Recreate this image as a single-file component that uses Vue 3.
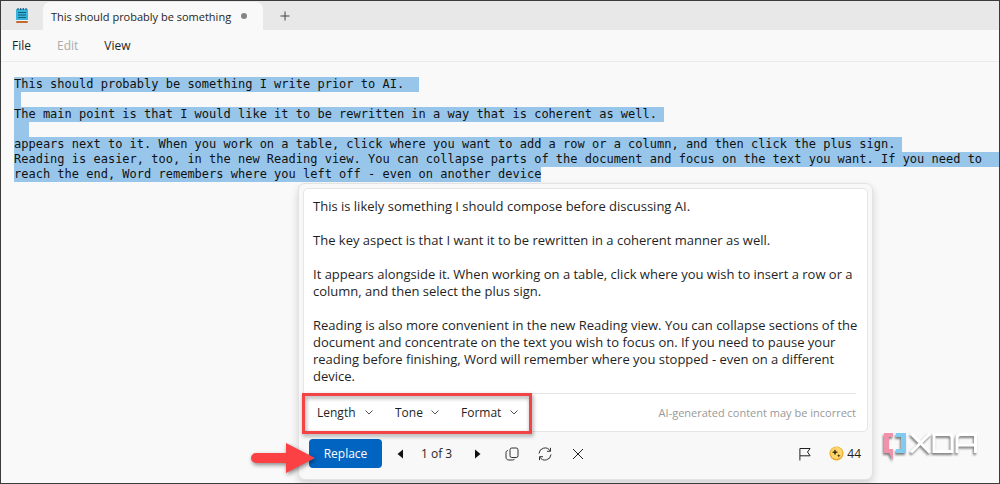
<script setup>
import { ref } from 'vue'

const lines = [
  { text: 'This should probably be something I write prior to AI.', tail: 'wide' },
  { text: '', tail: 'short' },
  { text: 'The main point is that I would like it to be rewritten in a way that is coherent as well.', tail: 'short' },
  { text: '', tail: 'wide' },
  { text: 'appears next to it. When you work on a table, click where you want to add a row or a column, and then click the plus sign.', tail: 'short' },
  { text: 'Reading is easier, too, in the new Reading view. You can collapse parts of the document and focus on the text you want. If you need to', tail: 'full' },
  { text: 'reach the end, Word remembers where you left off - even on another device', tail: 'none' },
]

const paragraphs = [
  ['This is likely something I should compose before discussing AI.'],
  ['The key aspect is that I want it to be rewritten in a coherent manner as well.'],
  ['It appears alongside it. When working on a table, click where you wish to insert a row or a', 'column, and then select the plus sign.'],
  [
    'Reading is also more convenient in the new Reading view. You can collapse sections of the',
    'document and concentrate on the text you wish to focus on. If you need to pause your',
    'reading before finishing, Word will remember where you stopped - even on a different',
    'device.',
  ],
]

const tools = ['Length', 'Tone', 'Format']
const page = ref(1)
const total = 3
const step = (d) => { page.value = Math.min(total, Math.max(1, page.value + d)) }
</script>

<template>
  <div class="window">
    <header class="tabbar">
      <div class="app-icon">
        <svg width="14" height="17" viewBox="0 0 14 17" aria-hidden="true">
          <rect x="1" y="2" width="12" height="12" rx="1" fill="#35b3d8" />
          <rect x="1" y="13" width="12" height="1" fill="#e9f4f8" />
          <rect x="1" y="14" width="12" height="2" rx="1" fill="#c4682b" />
          <path d="M3 1v2M5.7 1v2M8.3 1v2M11 1v2" stroke="#1d5f80" stroke-width="1.2" />
          <path d="M3 5.5h8M3 8h8M3 10.5h8" stroke="#155e83" stroke-width="1.1" />
        </svg>
      </div>
      <div class="tab">
        <span class="tab-title">This should probably be something</span>
        <span class="dot"></span>
      </div>
      <button class="new-tab" aria-label="New tab">
        <svg width="10" height="10" viewBox="0 0 10 10"><path d="M5 .5v9M.5 5h9" stroke="#444" stroke-width="1" /></svg>
      </button>
    </header>

    <nav class="menu">
      <button>File</button>
      <button disabled>Edit</button>
      <button>View</button>
    </nav>

    <main class="editor">
      <div class="document" role="textbox" aria-multiline="true" aria-label="Document" contenteditable="true" spellcheck="false">
        <div v-for="(line, i) in lines" :key="i" class="line">
          <span class="selected" :class="line.tail">{{ line.text }}</span>
        </div>
      </div>
    </main>

    <section class="panel">
      <div class="card">
        <div class="result">
          <p v-for="(p, i) in paragraphs" :key="i">
            <span v-for="row in p" :key="row" class="row">{{ row }}</span>
          </p>
        </div>
        <div class="tools">
          <label v-for="t in tools" :key="t" class="tool">
            <select :aria-label="t" :class="t.toLowerCase()"><option>{{ t }}</option></select>
            <svg width="8" height="5" viewBox="0 0 8 5"><path d="M.5.5 4 4 7.5.5" fill="none" stroke="#555" /></svg>
          </label>
          <span class="note">AI-generated content may be incorrect</span>
        </div>
      </div>
      <footer class="actions">
        <button class="replace">Replace</button>
        <div class="pager">
          <button aria-label="Previous" @click="step(-1)"><svg width="6" height="10" viewBox="0 0 6 10"><path d="M6 .5v9L.5 5z" fill="#111" /></svg></button>
          <span class="count">{{ page }} of {{ total }}</span>
          <button aria-label="Next" @click="step(1)"><svg width="6" height="10" viewBox="0 0 6 10"><path d="M0 .5v9L5.500 5z" fill="#111" /></svg></button>
        </div>
        <div class="icons">
          <button aria-label="Copy">
            <svg width="14" height="14" viewBox="0 0 14 14" fill="none" stroke="#333">
              <rect x="5" y="1" width="8" height="9.500" rx="1.800" />
              <path d="M3 3.500C1.700 3.700 1 4.400 1 5.600V10c0 2 1 3 3 3h3.500c1.200 0 1.900-.5 2.200-1.200" />
            </svg>
          </button>
          <button aria-label="Regenerate">
            <svg width="14" height="14" viewBox="0 0 14 14" fill="none" stroke="#333">
              <path d="M1 6.500A6 6 0 0 1 12.200 4M13 7.500A6 6 0 0 1 1.800 10" />
              <path d="M12.500 .8v3.500H9M1.500 13.200V9.700H5" />
            </svg>
          </button>
          <button aria-label="Close">
            <svg width="14" height="14" viewBox="0 0 14 14"><path d="M2 2l10 10M12 2 2 12" stroke="#222" /></svg>
          </button>
        </div>
        <div class="credits">
          <button aria-label="Report">
            <svg width="12" height="14" viewBox="0 0 12 14" fill="none" stroke="#222"><path d="M.9 13.500V1.500h10.200L8.500 5l2.600 3.800H1" /></svg>
          </button>
          <span class="coin">
            <svg width="15" height="15" viewBox="0 0 15 15" aria-hidden="true">
              <circle cx="7.500" cy="7.500" r="7" fill="#e9a82b" />
              <circle cx="7.500" cy="7" r="6" fill="#ffd66b" />
              <path d="M6 3.700 6.700 5.500 8.500 6.200 6.700 6.900 6 8.700 5.300 6.900 3.500 6.200 5.300 5.500z" fill="#33290f" stroke="#33290f" stroke-width=".5" />
              <path d="M9.800 8l.5 1.200 1.200.5-1.200.5-.5 1.200-.5-1.200-1.200-.5 1.200-.5z" fill="#33290f" />
            </svg>
            44
          </span>
        </div>
      </footer>
      <div class="highlight"></div>
      <svg class="arrow" width="66" height="34" viewBox="0 0 66 34" aria-hidden="true">
        <path d="M6 12H36V2L65 17 36 32V22H6a5 5 0 0 1 0-10z" fill="#fb4143" />
      </svg>
    </section>

    <svg class="watermark" width="98" height="34" viewBox="0 0 98 34" role="img" aria-label="XDA">
      <path d="M12 3H3V23H8L12 30V19H8V7H12z" fill="#f093aa" />
      <path d="M15 3H25V23H15V19H20V7H15z" fill="#82cbf0" />
      <g fill="none" stroke="#fff" stroke-width="3">
        <path d="M30 3.500 49 22.500M49 3.500 30 22.500" />
        <path d="M53 4.500H68Q71 4.500 71 7.500V21.500H53z" />
        <path d="M76 23V8Q76 4.500 80 4.500H94.500V23M76 15H94" />
      </g>
    </svg>
  </div>
</template>

<style>
body {
  background: #f9f9f9;
}
</style>

<style scoped>
* {
  box-sizing: border-box;
}

.window {
  position: relative;
  min-height: 100vh;
  overflow: hidden;
  border: 1px solid #3b3b3b;
  background: #f9f9f9;
  color: #1f1f1f;
  font: 12px/17px "Open Sans", "Noto Sans", sans-serif;
}

button {
  display: inline-flex;
  align-items: center;
  justify-content: center;
  padding: 0;
  border: 0;
  background: none;
  color: inherit;
  font: inherit;
}

.tabbar {
  display: flex;
  height: 29px;
  padding-top: 1px;
  background: #e8e8e8;
}

.app-icon {
  display: flex;
  align-items: center;
  justify-content: center;
  width: 42px;
  padding-bottom: 2px;
}

.tab {
  display: flex;
  align-items: center;
  justify-content: space-between;
  width: 220px;
  padding: 0 16px 0 8px;
  border-radius: 7px 7px 0 0;
  background: #f9f9f9;
  font-size: 11px;
  font-weight: 500;
}

.tab-title {
  white-space: nowrap;
}

.dot {
  width: 6px;
  height: 6px;
  border-radius: 50%;
  background: #858585;
}

.new-tab {
  width: 44px;
}

.menu {
  display: flex;
  align-items: center;
  gap: 26px;
  height: 32px;
  padding: 0 11px;
  border-bottom: 1px solid #ebebeb;
}

.menu button:disabled {
  color: #ababab;
}

.editor {
  padding: 15px 0 0 13px;
}

.document {
  outline: none;
  color: #111;
  font: 12px/15px "DejaVu Sans Mono", "Liberation Mono", monospace;
  white-space: pre;
}

.line {
  display: flex;
  height: 15px;
}

.selected {
  background: #98c6ea;
}

.short {
  padding-right: 7px;
}

.wide {
  padding-right: 15px;
}

.full {
  flex: 1;
}

.panel {
  position: absolute;
  top: 182px;
  left: 297px;
  width: 575px;
  padding: 4px;
  border: 1px solid #e3e3e3;
  border-radius: 7px;
  background: #f8f8f8;
  box-shadow: 0 4px 8px rgba(0, 0, 0, 0.16);
}

.card {
  padding: 9px 11px 0 9px;
  border: 1px solid #e6e6e6;
  border-radius: 5px;
  background: #fff;
}

.result {
  padding-bottom: 8px;
  border-bottom: 1px solid #e6e6e6;
  font-size: 13px;
}

.result p {
  margin: 0 0 17px;
}

.result p:last-child {
  margin-bottom: 0;
}

.row {
  display: block;
  white-space: nowrap;
}

.tools {
  display: flex;
  align-items: center;
  gap: 22px;
  height: 37px;
  padding-left: 4px;
}

.tool {
  display: flex;
  align-items: center;
  gap: 8px;
}

select {
  appearance: none;
  padding: 0;
  border: 0;
  background: none;
  color: inherit;
  font: inherit;
}

.length {
  width: 40px;
}

.tone {
  width: 28px;
}

.format {
  width: 41px;
}

.note {
  margin-left: auto;
  color: #999;
  font-size: 11px;
}

.actions {
  display: flex;
  align-items: center;
  height: 43px;
  padding: 0 7px 0 6px;
}

.replace {
  width: 73px;
  height: 29px;
  border-radius: 4px;
  background: #0264c1;
  color: #fff;
}

.pager {
  display: flex;
  align-items: center;
  gap: 18px;
  margin-left: 15px;
}

.count {
  min-width: 36px;
  white-space: nowrap;
}

.icons {
  display: flex;
  gap: 19px;
  margin-left: 24px;
}

.credits {
  display: flex;
  align-items: center;
  gap: 18px;
  margin-left: auto;
}

.coin {
  display: flex;
  align-items: center;
  gap: 3px;
}

.highlight {
  position: absolute;
  top: 209px;
  left: 3px;
  width: 230px;
  height: 41px;
  border: 3px solid #f44347;
  filter: drop-shadow(1px 2px 2px rgba(0, 0, 0, 0.4));
  pointer-events: none;
}

.arrow {
  position: absolute;
  top: 257px;
  left: -49px;
  filter: drop-shadow(1px 2px 2px rgba(0, 0, 0, 0.45));
  pointer-events: none;
}

.watermark {
  position: absolute;
  right: 20px;
  bottom: 19px;
  filter: drop-shadow(-1px 2px 1px rgba(0, 0, 0, 0.5));
}
</style>
